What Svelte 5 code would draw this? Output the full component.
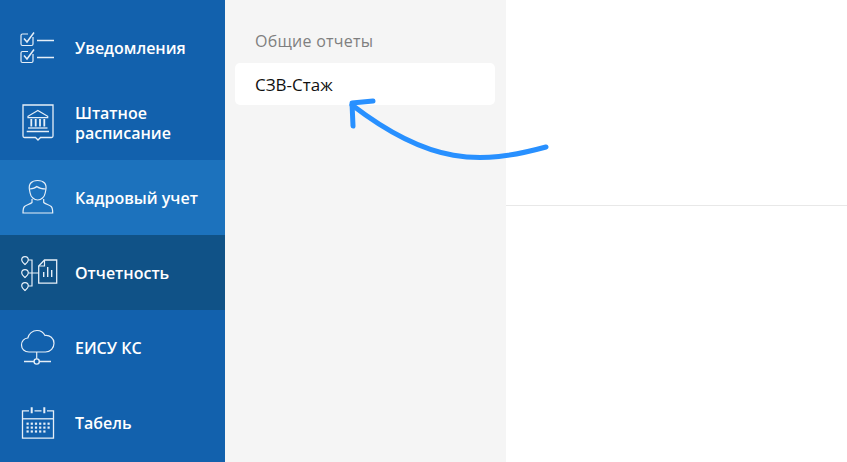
<script lang="ts">
  const items = [
    { id: 'notify', label: 'Уведомления' },
    { id: 'staff', label: 'Штатное расписание' },
    { id: 'hr', label: 'Кадровый учет', tone: 'hover' },
    { id: 'reports', label: 'Отчетность', tone: 'active' },
    { id: 'eisu', label: 'ЕИСУ КС' },
    { id: 'table', label: 'Табель' }
  ];
  const dots = [0, 1, 2, 3, 4, 5];
</script>

<div class="page">
  <nav class="sidebar">
    {#each items as item}
      <div class="item {item.tone ?? ''}">
        <svg class="icon" width="50" height="50" viewBox="0 0 50 50" fill="none" stroke="currentColor" stroke-width="1.2">
          {#if item.id === 'notify'}
            <path d="M16 11h-5.500a1.500 1.500 0 0 0-1.500 1.500v8.500a1.500 1.500 0 0 0 1.500 1.500h9a1.500 1.500 0 0 0 1.500-1.500v-7" />
            <path d="M12 15.500l3 3.500 7-9.500" stroke-width="1.500" />
            <path d="M16 28.500h-5.500a1.500 1.500 0 0 0-1.500 1.500v8a1.500 1.500 0 0 0 1.500 1.500h9a1.500 1.500 0 0 0 1.500-1.500v-7" />
            <path d="M12 32.500l3 3.500 7-9.500" stroke-width="1.500" />
            <path d="M25 17.500h17M25 34.500h17" stroke-width="1.400" />
          {:else if item.id === 'staff'}
            <path d="M11 7h30v31a1.500 1.500 0 0 1-1.500 1.500h-11l-2.500 2.500-2.500-2.500h-11a1.500 1.500 0 0 1-1.500-1.500z" stroke-width="1.300" />
            <path d="M25.800 12.500l-9.800 5.800v1.400h19.700v-1.400z" />
            <path d="M19.300 21v7.500M23.700 21v7.500M28 21v7.500M32.300 21v7.500" stroke-width="1.800" />
            <path d="M16 30h19.500" stroke-width="1.300" />
            <path d="M14.700 33.500h22.300" stroke-width="1.500" />
          {:else if item.id === 'hr'}
            <path d="M17.500 17c-1.200-6 2-9.500 8-9.500 6.500 0 9.500 3.500 8.300 9.500l-.6 3c-.7 4-4 7-7.500 7s-7-3-7.600-7z" />
            <path d="M17.800 16c3-.3 5.500-1 7-2.500 2 1.500 5.500 2.500 9 2.500" />
            <path d="M20 26v3.500c-1.500 1.500-6 2.500-7.500 4-1.300 1.300-1.500 4-1.500 6.500h29.700c0-2.500-.2-5.200-1.500-6.500-1.500-1.500-6-2.500-7.500-4V26" />
          {:else if item.id === 'reports'}
            <path d="M13 16.500c-1.500-1.200-3.300-2.600-3.300-4.500a3.300 3.300 0 0 1 6.600 0c0 1.900-1.800 3.300-3.300 4.500z" />
            <path d="M13 29.500c-1.500-1.200-3.300-2.600-3.300-4.500a3.300 3.300 0 0 1 6.600 0c0 1.900-1.800 3.300-3.300 4.500z" />
            <path d="M13 42.500c-1.500-1.200-3.300-2.600-3.300-4.500a3.300 3.300 0 0 1 6.600 0c0 1.900-1.800 3.300-3.300 4.500z" />
            <path d="M16.300 12H20v26h-3.700M16.300 25h10.400" />
            <path d="M32.500 12h12.200v23.200H26.700V18z" stroke-width="1.300" />
            <path d="M26.700 18h5.800v-6" />
            <path d="M31.700 29v-5M35.700 29v-10M39.700 29v-7" stroke-width="1.400" />
          {:else if item.id === 'eisu'}
            <path d="M17 29c-4.500 0-7.500-3-7.500-7 0-3.800 2.700-6.700 6.300-7 1-4.300 4.700-7.500 9.200-7.500 3.500 0 6.500 2 8 5 4.800-.6 9 2.900 9 7.700 0 4.600-3.500 8.800-8.500 8.800z" />
            <path d="M24.700 29v6.800" />
            <circle cx="24.700" cy="38.500" r="2.600" stroke-width="1.400" />
            <path d="M12 38.500h10M27.300 38.500H39" stroke-width="1.300" />
          {:else}
            <path d="M17 12.800h-6.500v27.400h31V12.800H35M22.500 12.800h7" stroke-width="1.300" />
            <path d="M10.500 20.800h31" stroke-width="1.300" />
            <path d="M19.700 9.200v6M32.300 9.200v6" stroke-width="2" />
            <g fill="currentColor" stroke="none">
              {#each dots as d}
                <rect x={14.500 + d * 4.200} y="24.600" width="2.200" height="2.200" />
                <rect x={14.500 + d * 4.200} y="28.500" width="2.200" height="2.200" />
                {#if d < 5}<rect x={14.500 + d * 4.200} y="32.400" width="2.200" height="2.200" />{/if}
              {/each}
            </g>
          {/if}
        </svg>
        <span class="label">{item.label}</span>
      </div>
    {/each}
  </nav>

  <section class="panel">
    <h2>Общие отчеты</h2>
    <div class="card">СЗВ-Стаж</div>
  </section>

  <main class="content">
    <div class="top"></div>
  </main>

  <svg class="arrow" width="847" height="462" viewBox="0 0 847 462" fill="none" stroke="#2890ff" stroke-width="5" stroke-linecap="round" stroke-linejoin="round">
    <path d="M546 147C480 165 430 165 352 105" />
    <path d="M373 101L352 103L353 126" />
  </svg>
</div>

<style>
  :global(body) {
    margin: 0;
    background: #fff;
  }

  .page {
    position: relative;
    display: flex;
    width: 847px;
    height: 462px;
    overflow: hidden;
    font-family: "Open Sans", "Noto Sans", sans-serif;
  }

  .sidebar {
    flex: none;
    width: 225px;
    padding-top: 10px;
    box-sizing: border-box;
    background: #1261ad;
    color: #fff;
  }

  .item {
    display: flex;
    align-items: center;
    height: 75px;
  }

  .item.hover {
    background: #1c72bd;
  }

  .item.active {
    background: #105287;
  }

  .icon {
    flex: none;
    margin-left: 12px;
    margin-right: 13px;
    color: #e6eff8;
  }

  .label {
    width: 130px;
    font-size: 16px;
    line-height: 20px;
    font-weight: 600;
  }

  .panel {
    flex: none;
    width: 281px;
    box-sizing: border-box;
    padding: 0 11px 0 10px;
    background: #f5f5f5;
  }

  h2 {
    margin: 0;
    padding: 30px 0 0 20px;
    height: 33px;
    font-size: 16px;
    line-height: 22px;
    font-weight: 400;
    letter-spacing: 0.25px;
    color: #7f7f7f;
  }

  .card {
    height: 42px;
    padding-left: 20px;
    border-radius: 5px;
    background: #fff;
    font-size: 17px;
    line-height: 44px;
    color: #111;
  }

  .content {
    flex: 1;
  }

  .top {
    height: 205px;
    border-bottom: 1px solid #e8e8e8;
  }

  .arrow {
    position: absolute;
    inset: 0;
    pointer-events: none;
  }
</style>
